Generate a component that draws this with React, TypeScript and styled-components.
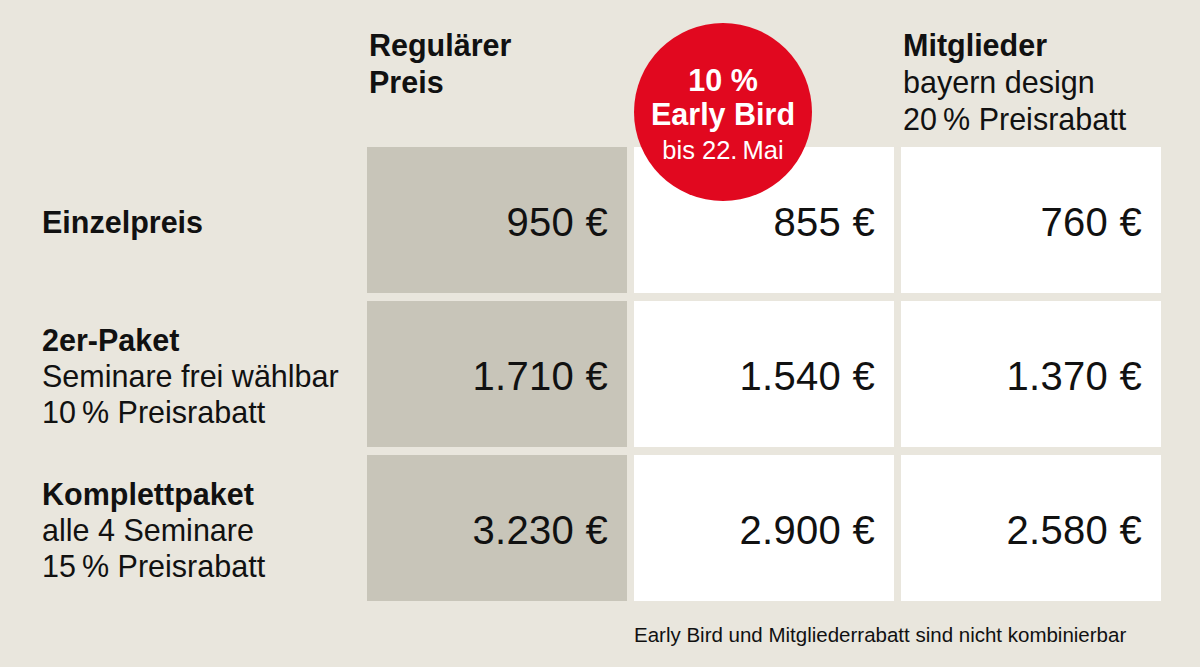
import React from "react";
import styled, { createGlobalStyle } from "styled-components";

const Global = createGlobalStyle`
  html, body { margin: 0; padding: 0; background: #e9e6dd; }
  body { font-family: "Liberation Sans", Arial, Helvetica, sans-serif; color: #111; }
`;

const Table = styled.div`
  display: grid;
  grid-template-columns: 360px repeat(3, 260px);
  grid-template-rows: 139px repeat(3, 146px) auto;
  column-gap: 7px;
  row-gap: 8px;
  width: 1200px;
  height: 667px;
  box-sizing: border-box;
`;

const HeadCell = styled.div`
  position: relative;
  z-index: 2;
  padding: 27px 0 0 2px;
  font-size: 30.5px;
  line-height: 37px;
`;

const Strong = styled.div`
  font-weight: 700;
`;

const Plain = styled.div`
  font-weight: 400;
`;

const Badge = styled.div`
  position: absolute;
  left: 0;
  top: 23px;
  width: 178px;
  height: 178px;
  border-radius: 50%;
  background: #e1081f;
  color: #fff;
  display: flex;
  flex-direction: column;
  align-items: center;
  justify-content: center;
  padding-top: 6px;
  box-sizing: border-box;
  text-align: center;
`;

const BadgeBig = styled.div`
  font-weight: 700;
  font-size: 30.5px;
  line-height: 34px;
`;

const BadgeSmall = styled.div`
  font-size: 25.5px;
  line-height: 34px;
  margin-top: 2px;
`;

const Label = styled.div`
  display: flex;
  flex-direction: column;
  justify-content: center;
  padding: 3px 0 0 42px;
  font-size: 30.5px;
  line-height: 36px;
`;

const PriceCell = styled.div<{ $tone: "gray" | "white" }>`
  background: ${(p) => (p.$tone === "gray" ? "#c8c5b9" : "#ffffff")};
  display: flex;
  align-items: center;
  justify-content: flex-end;
  padding: 4px 19px 0 0;
  font-size: 40px;
  letter-spacing: 0.3px;
  position: relative;
  z-index: 1;
`;

const Note = styled.div`
  grid-column: 3 / 5;
  padding: 14px 0 0 0;
  font-size: 20.5px;
`;

const rows = [
  { title: "Einzelpreis", sub: [], prices: ["950 €", "855 €", "760 €"] },
  {
    title: "2er-Paket",
    sub: ["Seminare frei wählbar", "10\u2009% Preisrabatt"],
    prices: ["1.710 €", "1.540 €", "1.370 €"],
  },
  {
    title: "Komplettpaket",
    sub: ["alle 4 Seminare", "15\u2009% Preisrabatt"],
    prices: ["3.230 €", "2.900 €", "2.580 €"],
  },
];

export default function App() {
  return (
    <>
      <Global />
      <Table>
        <div />
        <HeadCell>
          <Strong>Regulärer</Strong>
          <Strong>Preis</Strong>
        </HeadCell>
        <HeadCell>
          <Badge>
            <BadgeBig>10 %</BadgeBig>
            <BadgeBig>Early Bird</BadgeBig>
            <BadgeSmall>bis 22.{"\u2009"}Mai</BadgeSmall>
          </Badge>
        </HeadCell>
        <HeadCell>
          <Strong>Mitglieder</Strong>
          <Plain>bayern design</Plain>
          <Plain>20{"\u2009"}% Preisrabatt</Plain>
        </HeadCell>
        {rows.map((r) => (
          <React.Fragment key={r.title}>
            <Label>
              <Strong>{r.title}</Strong>
              {r.sub.map((s) => (
                <Plain key={s}>{s}</Plain>
              ))}
            </Label>
            {r.prices.map((p, i) => (
              <PriceCell key={p} $tone={i === 0 ? "gray" : "white"}>
                {p}
              </PriceCell>
            ))}
          </React.Fragment>
        ))}
        <Note>Early Bird und Mitgliederrabatt sind nicht kombinierbar</Note>
      </Table>
    </>
  );
}
